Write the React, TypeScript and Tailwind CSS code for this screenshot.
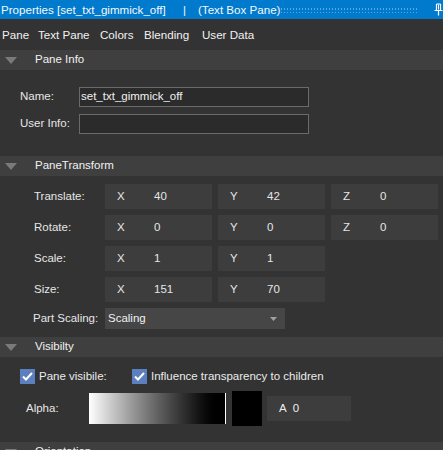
import React from "react";

const font = { fontFamily: '"Liberation Sans", Arial, sans-serif' };

function Header({ title }: { title: string }) {
  return (
    <div className="flex h-[20px] items-center bg-[#3f3f3f]">
      <svg width="12" height="8" viewBox="0 0 12 8" className="ml-[5px] mt-[1px]">
        <polygon points="0,0 12,0 6,7" fill="#7a7a7a" />
      </svg>
      <span className="ml-[18px] text-[11.5px] text-[#f1f1f1]">{title}</span>
    </div>
  );
}

function Field({ axis, value }: { axis: string; value: string }) {
  return (
    <div className="flex h-[25px] w-[107px] items-center bg-[#3d3d3d] text-[11.5px] text-[#e6e6e6]">
      <span className="ml-[12px] w-[37px]">{axis}</span>
      <span>{value}</span>
    </div>
  );
}

function VecRow({ label, vals }: { label: string; vals: [string, string][] }) {
  return (
    <div className="flex h-[25px] items-center">
      <span className="box-content w-[71px] pl-[34px] text-[11.5px] text-[#e6e6e6]">{label}</span>
      <div className="flex gap-[6px]">
        {vals.map(([a, v]) => (
          <Field key={a} axis={a} value={v} />
        ))}
      </div>
    </div>
  );
}

function Check({ label }: { label: string }) {
  return (
    <div className="flex items-center">
      <div className="flex h-[15px] w-[15px] items-center justify-center bg-[#5b7fbf]">
        <svg width="11" height="9" viewBox="0 0 11 9">
          <path d="M1 4.5 L4 7.5 L10 1" stroke="#ffffff" strokeWidth="2" fill="none" />
        </svg>
      </div>
      <span className="ml-[4px] text-[11.5px] text-[#ebebeb]">{label}</span>
    </div>
  );
}

export default function App() {
  return (
    <div className="h-[450px] w-[443px] overflow-hidden bg-[#333333]" style={font}>
      {/* title bar */}
      <div className="flex h-[19px] items-center whitespace-nowrap bg-[#007acc] text-[11.6px] text-[#f4f8fc]">
        <span className="w-[183px] shrink-0 pl-[1px]">Properties [set_txt_gimmick_off]</span>
        <span className="w-[15px] shrink-0">|</span>
        <span className="shrink-0">(Text Box Pane)</span>
        <div className="ml-auto mr-[17px] h-[6px] w-[137px] shrink-0 bg-[radial-gradient(circle,#5aa8df_0.6px,transparent_0.9px)] bg-[length:3px_4px]" />
        <svg width="9" height="13" viewBox="0 0 9 13" className="mr-[2px] shrink-0">
          <path d="M2.5 1 V7 M6.5 1 V7 M2.5 1 H6.5 M0.5 7.5 H8.5 M4.5 7.5 V12.5" stroke="#ffffff" strokeWidth="1.2" fill="none" />
          <path d="M4.5 1.5 V6.5" stroke="#ffffff" strokeWidth="1" />
        </svg>
      </div>
      {/* menu */}
      <div className="flex h-[31px] items-center whitespace-nowrap bg-[#333333] text-[11.6px] text-[#f1f1f1]">
        <span className="w-[38px] shrink-0 pl-[2px]">Pane</span>
        <span className="w-[62px] shrink-0">Text Pane</span>
        <span className="w-[44px] shrink-0">Colors</span>
        <span className="w-[58px] shrink-0">Blending</span>
        <span className="shrink-0">User Data</span>
      </div>

      <Header title="Pane Info" />
      <div className="flex flex-col gap-[7px] pb-[22px] pt-[17px]">
        <div className="flex h-[20px] items-center">
          <span className="w-[79px] pl-[20px] text-[11.5px] text-[#e6e6e6]">Name:</span>
          <div className="flex h-[20px] w-[230px] items-center border border-[#6a6a6a] bg-[#2b2b2b] pl-[1px] text-[11.5px] text-[#f0f0f0]">
            set_txt_gimmick_off
          </div>
        </div>
        <div className="flex h-[20px] items-center">
          <span className="w-[79px] pl-[20px] text-[11.5px] text-[#e6e6e6]">User Info:</span>
          <div className="h-[20px] w-[230px] border border-[#6a6a6a] bg-[#2b2b2b]" />
        </div>
      </div>

      <Header title="PaneTransform" />
      <div className="flex flex-col gap-[6px] pb-[8px] pt-[8px]">
        <VecRow label="Translate:" vals={[["X", "40"], ["Y", "42"], ["Z", "0"]]} />
        <VecRow label="Rotate:" vals={[["X", "0"], ["Y", "0"], ["Z", "0"]]} />
        <VecRow label="Scale:" vals={[["X", "1"], ["Y", "1"]]} />
        <VecRow label="Size:" vals={[["X", "151"], ["Y", "70"]]} />
        <div className="flex h-[21px] items-center">
          <span className="box-content w-[72px] pl-[33px] text-[11.5px] text-[#e6e6e6]">Part Scaling:</span>
          <div className="flex h-[21px] w-[180px] items-center bg-[#464646] pl-[3px] text-[11.5px] text-[#f0f0f0]">
            <span>Scaling</span>
            <svg width="7" height="4" viewBox="0 0 7 4" className="ml-auto mr-[8px]">
              <polygon points="0,0 7,0 3.5,4" fill="#a0a0a0" />
            </svg>
          </div>
        </div>
      </div>

      <Header title="Visibilty" />
      <div className="flex flex-col pt-[12px]">
        <div className="flex h-[15px] items-center pl-[20px]">
          <div className="w-[112px]">
            <Check label="Pane visibile:" />
          </div>
          <Check label="Influence transparency to children" />
        </div>
        <div className="mt-[7px] flex h-[35px] items-center">
          <span className="w-[89px] pl-[26px] text-[11.5px] text-[#e6e6e6]">Alpha:</span>
          <div className="h-[31px] w-[136px] bg-gradient-to-r from-[#ffffff] to-[#000000]" />
          <div className="h-[31px] w-[1px] bg-[#ffffff]" />
          <div className="ml-[6px] h-[35px] w-[30px] bg-[#000000]" />
          <div className="ml-[5px] flex h-[25px] w-[84px] items-center bg-[#3d3d3d] text-[11.5px] text-[#ededed]">
            <span className="ml-[12px]">A</span>
            <span className="ml-[6px]">0</span>
          </div>
        </div>
      </div>
      <div className="mt-[16px]">
        <Header title="Orientation" />
      </div>
    </div>
  );
}
